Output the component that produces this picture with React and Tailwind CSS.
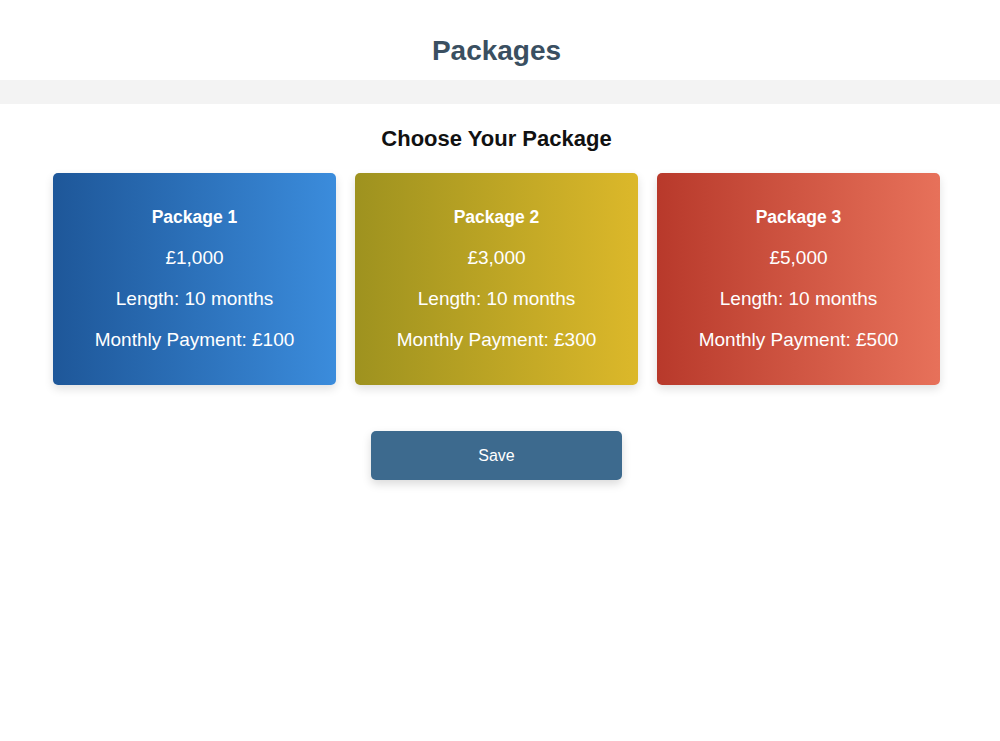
const packages = [
  { name: 'Package 1', amount: '£1,000', months: 10, monthly: '£100', bg: 'bg-gradient-to-r from-[#1e5799] to-[#3b8cdc]' },
  { name: 'Package 2', amount: '£3,000', months: 10, monthly: '£300', bg: 'bg-gradient-to-r from-[#9e921f] to-[#dcb82a]' },
  { name: 'Package 3', amount: '£5,000', months: 10, monthly: '£500', bg: 'bg-gradient-to-r from-[#b8392b] to-[#e7715a]' },
];

export default function App() {
  return (
    <div className="min-h-screen bg-white font-['Liberation_Sans',Arial,sans-serif]">
      {/* Header */}
      <header className="h-[80px] w-[993px] pt-[35px] text-center">
        <h1 className="text-[28px] leading-[32px] font-bold text-[#3a4f61]">Packages</h1>
      </header>
      <div className="h-[24px] bg-[#f3f3f3]" />

      {/* Package chooser */}
      <section className="w-[993px] pt-[22px]">
        <h2 className="text-center text-[22px] leading-[26px] font-bold text-[#111]">Choose Your Package</h2>

        <div className="mt-[21px] mx-auto w-[887px] grid grid-cols-3 gap-[19px]">
          {packages.map((p) => (
            <div
              key={p.name}
              className={`${p.bg} h-[212px] rounded-[5px] shadow-[0_4px_10px_rgba(0,0,0,0.12)] text-white text-center flex flex-col gap-[19px] pt-[33px]`}
            >
              <div className="h-[22px] leading-[22px] text-[17.5px] font-bold">{p.name}</div>
              <div className="h-[22px] leading-[22px] text-[19px]">{p.amount}</div>
              <div className="h-[22px] leading-[22px] text-[19px]">Length: {p.months} months</div>
              <div className="h-[22px] leading-[22px] text-[19px]">Monthly Payment: {p.monthly}</div>
            </div>
          ))}
        </div>

        <div className="mt-[46px] flex justify-center">
          <button className="w-[251px] h-[49px] rounded-[5px] bg-[#3d6a8e] text-white text-[16px] shadow-[0_4px_10px_rgba(0,0,0,0.15)]">
            Save
          </button>
        </div>
      </section>
    </div>
  );
}
